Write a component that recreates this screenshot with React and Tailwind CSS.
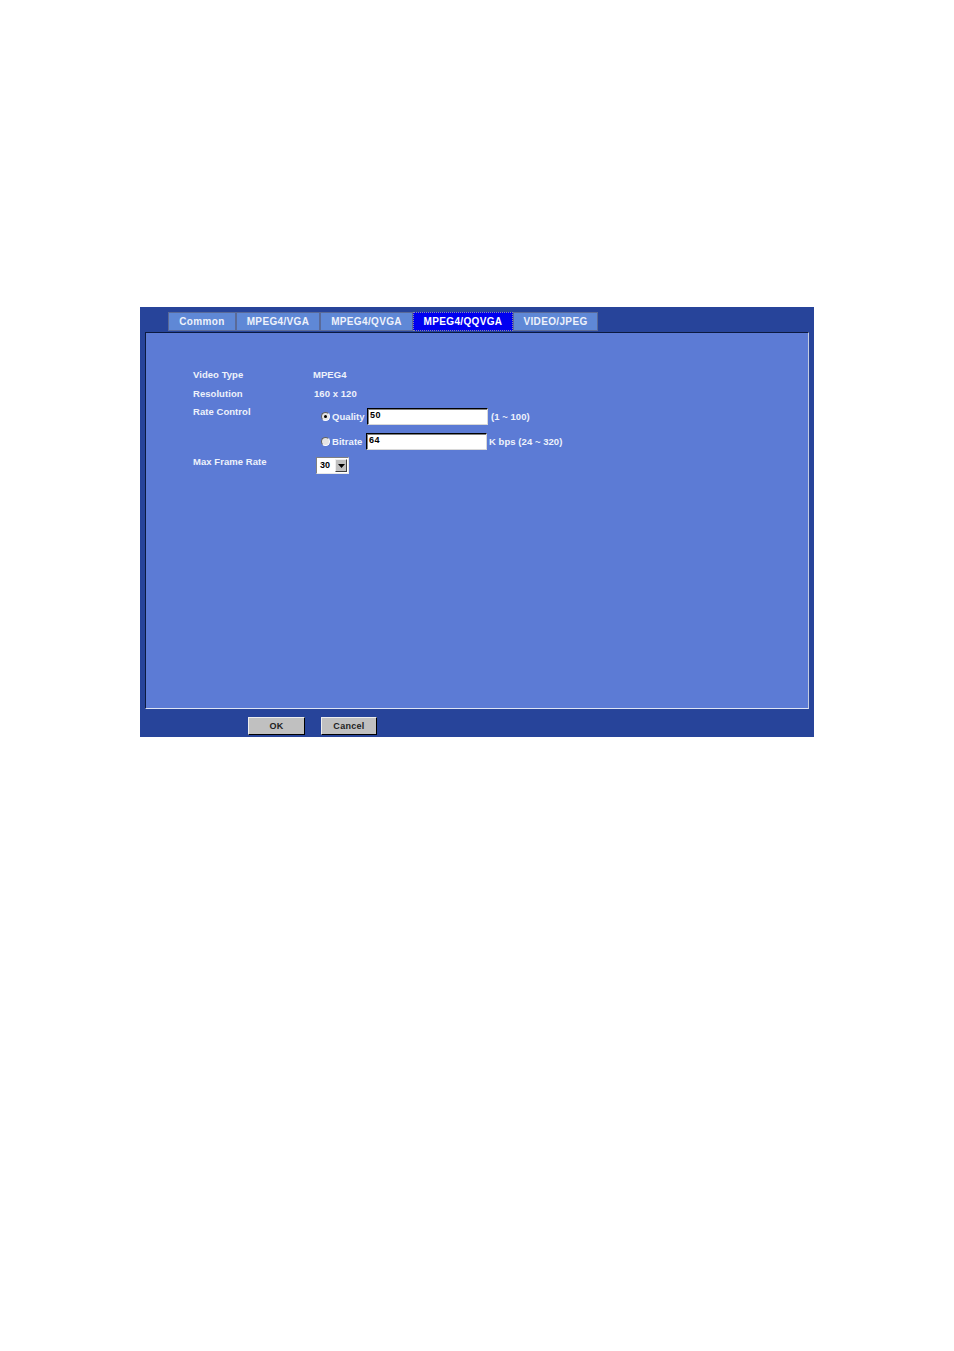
import React from 'react';

const font = "font-['Liberation_Sans',Arial,sans-serif]";

const tabs = [
  { label: 'Common', width: 'w-[68px]' },
  { label: 'MPEG4/VGA', width: 'w-[84px]' },
  { label: 'MPEG4/QVGA', width: 'w-[93px]' },
  { label: 'MPEG4/QQVGA', width: 'w-[100px]', active: true },
  { label: 'VIDEO/JPEG', width: 'w-[85px]' },
];

const Tab = ({ tab }) => (
  <div
    className={
      tab.active
        ? `${tab.width} h-[19px] flex items-center justify-center bg-[#0000f0] border border-dotted border-[#8a8aa8] text-white text-[10px] font-bold tracking-[0.35px]`
        : `${tab.width} h-[19px] flex items-center justify-center bg-[#5f88d6] border border-[#5a6a98] text-[#eef2fb] text-[10px] font-bold tracking-[0.35px]`
    }
  >
    {tab.label}
  </div>
);

const Radio = ({ checked }) => (
  <span className="w-[9px] h-[9px] rounded-full bg-[#e4e4e4] border border-[#606060] border-b-white border-r-white flex items-center justify-center shrink-0">
    {checked && <span className="w-[3px] h-[3px] rounded-full bg-black" />}
  </span>
);

const Field = ({ value, width }) => (
  <div className={`${width} h-[17px] bg-white border border-black border-r-[#d8d8d8] border-b-[#d8d8d8] shadow-[inset_1px_1px_0_#808080] flex items-center pl-[2px] pb-[1px] text-black text-[9px] font-bold tracking-[0.4px]`}>
    {value}
  </div>
);

const Button = ({ children, width }) => (
  <div className={`${width} h-[18px] bg-[#c0c0c0] border border-[#eeeeee] border-r-black border-b-black flex items-center justify-center pt-[1px] text-[#222222] text-[9px] font-bold tracking-[0.3px]`}>
    {children}
  </div>
);

export default function App() {
  return (
    <div className={`min-h-[1351px] bg-white pt-[307px] pl-[140px] ${font}`}>
      <div className="w-[674px] h-[430px] bg-[#27449a] flex flex-col pt-[5px] px-[5px]">
        <div className="flex pl-[23px] h-[20px]">
          {tabs.map((tab) => (
            <Tab key={tab.label} tab={tab} />
          ))}
        </div>
        <div className="w-[664px] h-[377px] bg-[#5c7bd5] border border-[#0c1a40] border-r-[#c4cce0] border-b-[#dfe5f5] pl-[47px] pt-[34px] text-[9.5px] font-bold tracking-[0.05px] text-[#eef2fb]">
          <div className="flex h-[18px] items-center pb-[1px]">
            <div className="w-[120px]">Video Type</div>
            <div>MPEG4</div>
          </div>
          <div className="flex h-[18px] items-center">
            <div className="w-[121px]">Resolution</div>
            <div>160 x 120</div>
          </div>
          <div className="flex h-[54px]">
            <div className="w-[128px] h-[18px] flex items-center">Rate Control</div>
            <div className="flex flex-col pt-[5px] gap-[8px]">
              <div className="flex items-center h-[17px]">
                <Radio checked />
                <span className="ml-[2px] w-[35px] pt-[2px]">Quality</span>
                <Field value="50" width="w-[121px]" />
                <span className="ml-[3px] pt-[2px]">(1 ~ 100)</span>
              </div>
              <div className="flex items-center h-[17px]">
                <Radio />
                <span className="ml-[2px] w-[34px] pt-[2px]">Bitrate</span>
                <Field value="64" width="w-[121px]" />
                <span className="ml-[2px] pt-[2px]">K bps (24 ~ 320)</span>
              </div>
            </div>
          </div>
          <div className="flex h-[17px]">
            <div className="w-[123px] h-[11px] flex items-center">Max Frame Rate</div>
            <div className="w-[33px] h-[17px] bg-white border border-[#808080] border-r-[#e8e8e8] border-b-[#e8e8e8] flex items-center justify-between pl-[3px] pr-[1px] text-black text-[9px]">
              <span>30</span>
              <span className="w-[12px] h-[13px] bg-[#c0c0c0] border border-[#eeeeee] border-r-[#404040] border-b-[#404040] flex items-center justify-center">
                <svg width="7" height="4" viewBox="0 0 7 4">
                  <path d="M0 0h7L3.5 4z" fill="#000" />
                </svg>
              </span>
            </div>
          </div>
        </div>
        <div className="flex pl-[103px] pt-[8px] gap-[16px]">
          <Button width="w-[57px]">OK</Button>
          <Button width="w-[56px]">Cancel</Button>
        </div>
      </div>
    </div>
  );
}
